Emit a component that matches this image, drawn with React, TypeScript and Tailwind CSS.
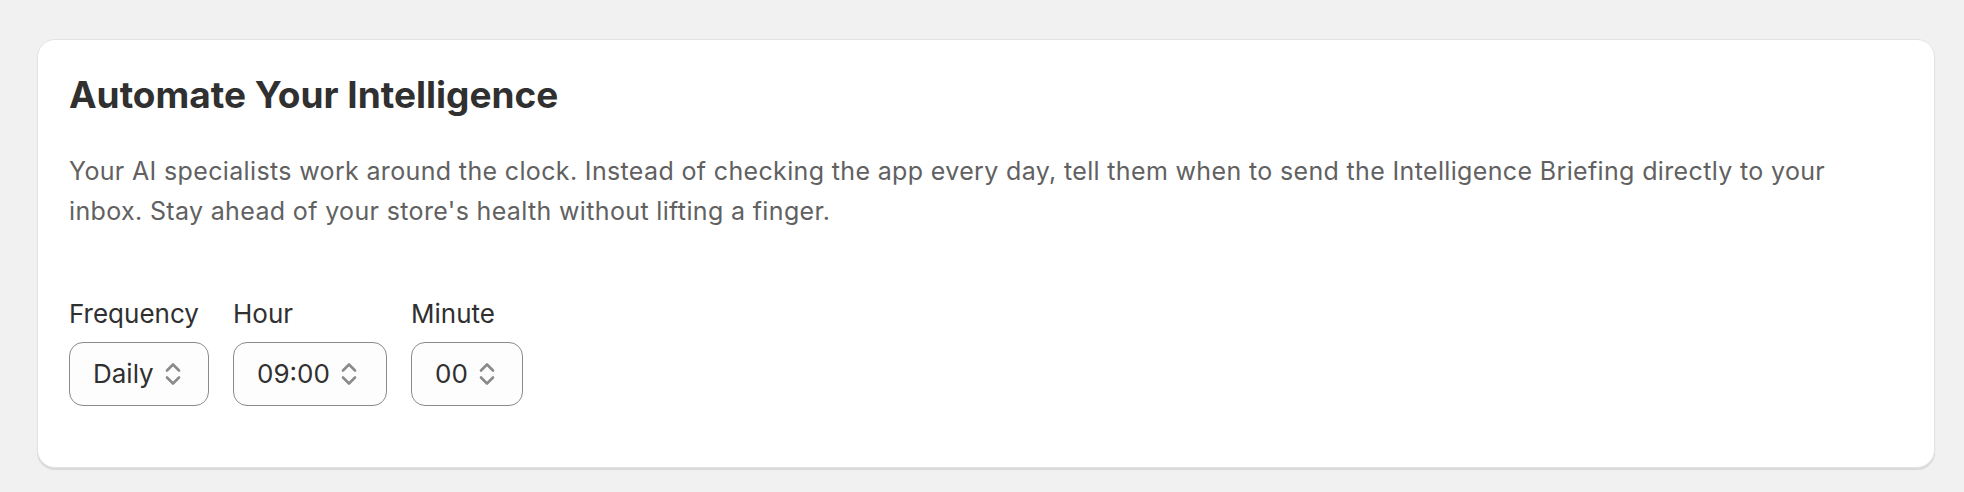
import React from "react";

function SelectIcon() {
  return (
    <svg width="18" height="28" viewBox="0 0 18 28" fill="none" className="shrink-0">
      <path d="M3 10.5 L9 4.5 L15 10.5" stroke="#8a8a8a" strokeWidth="2.6" strokeLinecap="round" strokeLinejoin="round" />
      <path d="M3 17.5 L9 23.5 L15 17.5" stroke="#8a8a8a" strokeWidth="2.6" strokeLinecap="round" strokeLinejoin="round" />
    </svg>
  );
}

function Field({ label, value, width }: { label: string; value: string; width: string }) {
  return (
    <div className="flex flex-col">
      <label className="text-[26px] leading-[32px] text-[#303030]">{label}</label>
      <div
        className={`mt-[12px] flex h-[64px] items-center gap-[10px] rounded-[14px] border border-[#8a8a8a] bg-[#fdfdfd] pl-[23px] ${width}`}
      >
        <span className="text-[26px] leading-[32px] text-[#303030]">{value}</span>
        <SelectIcon />
      </div>
    </div>
  );
}

export default function App() {
  return (
    <div
      className="h-[492px] w-full bg-[#f1f1f1] pl-[37px] pr-[29px] pt-[39px]"
      style={{ fontFamily: "Inter, 'Noto Sans', sans-serif" }}
    >
      <div className="h-[429px] rounded-[18px] border border-[#e3e3e3] bg-white px-[31px] pt-[33px] shadow-[0_2px_1px_0_rgba(0,0,0,0.10)]">
        <h1 className="text-[37px] font-bold leading-[44px] text-[#303030]">Automate Your Intelligence</h1>
        <p className="mt-[34px] max-w-[1780px] text-[25px] leading-[40px] tracking-[0.35px] text-[#616161]">
          Your AI specialists work around the clock. Instead of checking the app every day, tell them when to send the
          Intelligence Briefing directly to your inbox. Stay ahead of your store's health without lifting a finger.
        </p>
        <div className="mt-[67px] flex gap-[24px]">
          <Field label="Frequency" value="Daily" width="w-[140px]" />
          <Field label="Hour" value="09:00" width="w-[154px]" />
          <Field label="Minute" value="00" width="w-[112px]" />
        </div>
      </div>
    </div>
  );
}
